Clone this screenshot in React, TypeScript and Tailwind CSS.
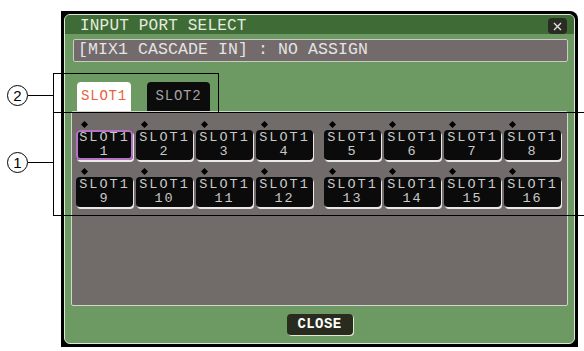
import React from 'react';

// Fonte "pixel" do console: Liberation Mono é o mais próximo disponível
const mono = { fontFamily: '"Liberation Mono", "DejaVu Sans Mono", monospace' };

const PortButton = ({ n, selected }: { n: number; selected?: boolean }) => (
  <div className="flex flex-col items-start w-[57px]">
    <div className="h-[8px] w-full flex items-center pl-[6px]">
      <div className="w-[5px] h-[5px] bg-black rotate-45" />
    </div>
    <div
      className={
        'mt-[2px] w-[57px] h-[30px] bg-[#0b0b0b] rounded-[4px] flex flex-col items-center justify-center text-[#c9c9c9] text-[13.5px] leading-[14px] tracking-[2px] shadow-[1px_2px_0_#e9e9e9] ' +
        (selected ? 'outline-2 outline-[#b573c6] -outline-offset-2' : '')
      }
      style={mono}
    >
      <span>SLOT1</span>
      <span>{n}</span>
    </div>
  </div>
);

const Grupo = ({ nums }: { nums: number[] }) => (
  <div className="flex gap-[3px]">
    {nums.map((n) => (
      <PortButton key={n} n={n} selected={n === 1} />
    ))}
  </div>
);

const Circulo = ({ label }: { label: string }) => (
  <div
    className="w-[21px] h-[21px] rounded-full border border-black flex items-center justify-center text-[15px] leading-none text-black bg-white"
    style={{ fontFamily: '"Liberation Sans", Arial, sans-serif' }}
  >
    {label}
  </div>
);

export default function App() {
  return (
    <div className="relative w-[584px] h-[351px] bg-white overflow-hidden">
      {/* Janela INPUT PORT SELECT */}
      <div className="pl-[61px] pt-[11px]">
        <div className="w-[517px] h-[336px] bg-black p-[3px] rounded-tr-[8px]">
          <div className="w-full h-full rounded-[6px] border border-[#dfe9d8] bg-[#6c9a62] flex flex-col" style={mono}>
            {/* Cabeçalho */}
            <div className="h-[19px] bg-[#3f6b36] rounded-t-[5px] flex items-center justify-between pl-[15px] pr-[7px]">
              <span className="text-[#e6ecdf] text-[16px] leading-none tracking-[0.2px] mt-[2px]">INPUT PORT SELECT</span>
              <div className="w-[19px] h-[16px] mt-[3px] rounded-[4px] bg-[#2a2c24] flex items-center justify-center">
                <svg width="9" height="9" viewBox="0 0 9 9">
                  <path d="M1 1 L8 8 M8 1 L1 8" stroke="#e0e0e0" strokeWidth="1.4" />
                </svg>
              </div>
            </div>

            {/* Barra de informação */}
            <div className="mt-[5px] ml-[8px] mr-[6px] h-[23px] bg-[#726a6b] border border-[#c9cbc4] rounded-[2px] flex items-center pl-[4px]">
              <span className="text-[#e4e4e4] text-[16.5px] leading-none tracking-[0.1px]">[MIX1 CASCADE IN] : NO ASSIGN</span>
            </div>

            {/* Abas */}
            <div className="mt-[20px] ml-[12px] flex gap-[16px] items-end h-[29px]">
              <div className="w-[54px] h-[29px] bg-white rounded-t-[4px] flex items-center justify-center text-[#ea5f3c] text-[14px] tracking-[0.8px]">
                SLOT1
              </div>
              <div className="w-[63px] h-[29px] bg-[#0c0c0c] rounded-t-[4px] flex items-center justify-center text-[#a3a3a3] text-[14px] tracking-[0.8px]">
                SLOT2
              </div>
            </div>

            {/* Área de portas */}
            <div className="ml-[6px] mr-[6px] h-[195px] bg-[#716b6a] border border-[#cfd6cb] rounded-[2px] pt-[8px] pl-[4px] flex flex-col gap-[7px]">
              <div className="flex gap-[11px]">
                <Grupo nums={[1, 2, 3, 4]} />
                <Grupo nums={[5, 6, 7, 8]} />
              </div>
              <div className="flex gap-[11px]">
                <Grupo nums={[9, 10, 11, 12]} />
                <Grupo nums={[13, 14, 15, 16]} />
              </div>
            </div>

            {/* Rodapé */}
            <div className="flex-1 flex items-center justify-center">
              <div className="w-[66px] h-[21px] bg-[#282b1d] rounded-[4px] flex items-center justify-center text-white text-[14px] font-bold tracking-[0.4px] shadow-[1px_1px_0_#dfe9d8]">
                CLOSE
              </div>
            </div>
          </div>
        </div>
      </div>

      {/* Anotações ① e ② */}
      <div className="absolute left-[53px] top-[73px] w-[166px] h-[40px] border border-black" />
      <div className="absolute left-[53px] top-[112px] w-[560px] h-[104px] border border-black" />
      <div className="absolute left-[28px] top-[95px] w-[25px] h-px bg-black" />
      <div className="absolute left-[28px] top-[162px] w-[25px] h-px bg-black" />
      <div className="absolute left-[7px] top-[85px]">
        <Circulo label="2" />
      </div>
      <div className="absolute left-[7px] top-[152px]">
        <Circulo label="1" />
      </div>
    </div>
  );
}
